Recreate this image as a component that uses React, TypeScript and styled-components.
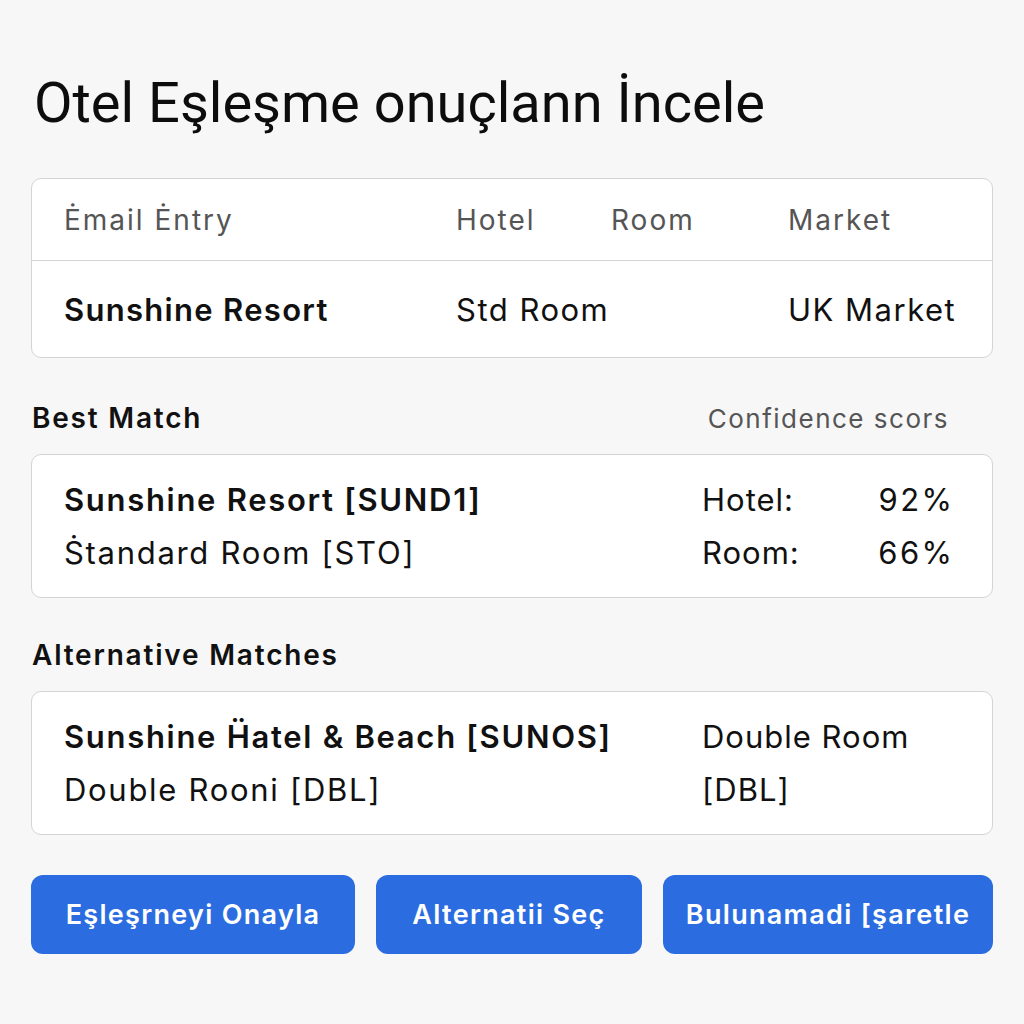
import styled, { createGlobalStyle } from 'styled-components';

const GlobalStyle = createGlobalStyle`
  html, body {
    margin: 0;
    padding: 0;
    background: #f7f7f7;
  }
  body {
    font-family: Inter, "Liberation Sans", sans-serif;
    color: #111;
  }
`;

const Page = styled.div`
  width: 962px;
  padding: 72px 31px 0 31px;
  box-sizing: content-box;
`;

const Title = styled.h1`
  margin: 0 0 0 3px;
  font-family: Roboto, "Liberation Sans", sans-serif;
  font-size: 56px;
  font-weight: 400;
  line-height: 62px;
  color: #0d0d0d;
`;

const Card = styled.div`
  background: #fff;
  border: 1.5px solid #d4d4d4;
  border-radius: 10px;
  box-sizing: border-box;
`;

const EntryCard = styled(Card)`
  margin-top: 44px;
  height: 180px;
`;

const EntryGrid = styled.div<{ $head?: boolean }>`
  display: grid;
  grid-template-columns: 392px 155px 177px 1fr;
  align-items: center;
  height: ${p => (p.$head ? '81px' : '97px')};
  padding-left: 32px;
  border-bottom: ${p => (p.$head ? '1.5px solid #d4d4d4' : 'none')};
  font-size: ${p => (p.$head ? '28px' : '31px')};
  letter-spacing: ${p => (p.$head ? '2px' : '1.5px')};
  color: ${p => (p.$head ? '#555' : '#111')};
`;

const Cell = styled.div<{ $span?: number; $bold?: boolean }>`
  grid-column: ${p => (p.$span ? `span ${p.$span}` : 'auto')};
  font-weight: ${p => (p.$bold ? 600 : 400)};
  letter-spacing: ${p => (p.$bold ? '1.3px' : 'inherit')};
  white-space: nowrap;
`;

const SectionHead = styled.div<{ $top: number }>`
  display: flex;
  justify-content: space-between;
  align-items: center;
  margin-top: ${p => p.$top}px;
  height: 40px;
  padding-right: 44px;
`;

const SectionLabel = styled.h2`
  margin: 0 0 0 1px;
  font-size: 28px;
  font-weight: 600;
  letter-spacing: 1.8px;
`;

const SectionNote = styled.span`
  font-size: 26px;
  letter-spacing: 1.5px;
  color: #555;
`;

const MatchCard = styled(Card)`
  margin-top: 16px;
  height: 144px;
  display: flex;
  align-items: center;
  justify-content: space-between;
  padding: 0 40px 0 32px;
`;

const Lines = styled.div`
  display: flex;
  flex-direction: column;
  gap: 14px;
`;

const Line = styled.div<{ $bold?: boolean }>`
  font-size: 31px;
  line-height: 39px;
  letter-spacing: 1.7px;
  font-weight: ${p => (p.$bold ? 600 : 400)};
  white-space: nowrap;
`;

const Scores = styled.div`
  display: grid;
  grid-template-columns: 1fr auto;
  width: 250px;
  row-gap: 14px;
  font-size: 31px;
  line-height: 39px;
  letter-spacing: 1px;
`;

const Score = styled.span<{ $value?: boolean }>`
  text-align: ${p => (p.$value ? 'right' : 'left')};
  letter-spacing: ${p => (p.$value ? '2.4px' : 'inherit')};
  margin-right: ${p => (p.$value ? '-2.4px' : '0')};
`;

const AltSide = styled(Lines)`
  width: 250px;
`;

const SideLine = styled(Line)`
  letter-spacing: 1px;
`;

const Actions = styled.div`
  display: grid;
  grid-template-columns: 324px 266px 330px;
  justify-content: space-between;
  margin-top: 40px;
`;

const ActionButton = styled.button`
  height: 79px;
  border: none;
  border-radius: 12px;
  background: #2b6de0;
  color: #fff;
  font-family: Inter, "Liberation Sans", sans-serif;
  font-size: 27px;
  font-weight: 600;
  letter-spacing: 1.3px;
  white-space: nowrap;
  cursor: pointer;
`;

export default function App() {
  return (
    <>
      <GlobalStyle />
      <Page>
        <Title>Otel Eşleşme onuçlann İncele</Title>

        <EntryCard>
          <EntryGrid $head>
            <Cell>Ėmail Ėntry</Cell>
            <Cell>Hotel</Cell>
            <Cell>Room</Cell>
            <Cell>Market</Cell>
          </EntryGrid>
          <EntryGrid>
            <Cell $bold>Sunshine Resort</Cell>
            <Cell $span={2}>Std Room</Cell>
            <Cell>UK Market</Cell>
          </EntryGrid>
        </EntryCard>

        <SectionHead $top={40}>
          <SectionLabel>Best Match</SectionLabel>
          <SectionNote>Confidence scors</SectionNote>
        </SectionHead>
        <MatchCard>
          <Lines>
            <Line $bold>Sunshine Resort [SUND1]</Line>
            <Line>Ṡtandard Room [STO]</Line>
          </Lines>
          <Scores>
            <Score>Hotel:</Score>
            <Score $value>92%</Score>
            <Score>Room:</Score>
            <Score $value>66%</Score>
          </Scores>
        </MatchCard>

        <SectionHead $top={37}>
          <SectionLabel>Alternative Matches</SectionLabel>
        </SectionHead>
        <MatchCard>
          <Lines>
            <Line $bold>Sunshine Ḧatel &amp; Beach [SUNOS]</Line>
            <Line>Double Rooni [DBL]</Line>
          </Lines>
          <AltSide>
            <SideLine>Double Room</SideLine>
            <SideLine>[DBL]</SideLine>
          </AltSide>
        </MatchCard>

        <Actions>
          <ActionButton>Eşleşrneyi Onayla</ActionButton>
          <ActionButton>Alternatii Seç</ActionButton>
          <ActionButton>Bulunamadi [şaretle</ActionButton>
        </Actions>
      </Page>
    </>
  );
}
